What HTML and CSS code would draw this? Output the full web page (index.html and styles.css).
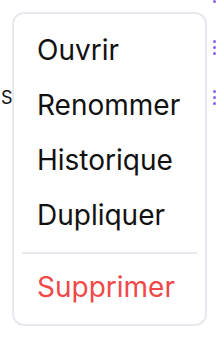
FILE: index.html
```html
<!DOCTYPE html>
<html lang="fr">

<head>
    <meta charset="UTF-8" />
    <meta name="viewport" content="width=device-width, initial-scale=1.0" />
    <title>Menu</title>
    <link rel="stylesheet" href="styles.css">
</head>

<body>

    <div class="page">
        <!-- liste derrière le menu -->
        <div class="list">
            <div class="row first">
                <span class="label"></span>
                <svg class="more" width="3" height="15" viewBox="0 0 3 15"><circle cx="1.5" cy="1.5" r="1.5"/><circle cx="1.5" cy="7.5" r="1.5"/><circle cx="1.5" cy="13.5" r="1.5"/></svg>
            </div>
            <div class="row">
                <span class="label"></span>
                <svg class="more" width="3" height="15" viewBox="0 0 3 15"><circle cx="1.5" cy="1.5" r="1.5"/><circle cx="1.5" cy="7.5" r="1.5"/><circle cx="1.5" cy="13.5" r="1.5"/></svg>
            </div>
            <div class="row">
                <span class="label">Sa</span>
                <svg class="more" width="3" height="15" viewBox="0 0 3 15"><circle cx="1.5" cy="1.5" r="1.5"/><circle cx="1.5" cy="7.5" r="1.5"/><circle cx="1.5" cy="13.5" r="1.5"/></svg>
            </div>
        </div>

        <!-- menu contextuel -->
        <div class="menu">
            <div class="item">Ouvrir</div>
            <div class="item">Renommer</div>
            <div class="item">Historique</div>
            <div class="item">Dupliquer</div>
            <div class="sep"></div>
            <div class="item danger">Supprimer</div>
        </div>
    </div>

</body>

</html>
```

FILE: styles.css
```css
html,
body {
    margin: 0;
    padding: 0;
    background: #fff;
    color: #111;
    font-family: Inter, "Noto Sans", sans-serif;
}

.page {
    position: relative;
    width: 218px;
    height: 338px;
    overflow: hidden;
}

.list {
    margin-top: -32.5px;
}

.row {
    height: 50px;
    display: flex;
    justify-content: space-between;
    align-items: center;
    padding: 0 2.5px 0 1px;
}

.row.first {
    height: 55px;
}

.label {
    font-size: 18px;
}

.more {
    fill: #8b5cf6;
}

/* menu */
.menu {
    position: absolute;
    top: 12px;
    left: 12px;
    width: 195px;
    box-sizing: border-box;
    background: #fff;
    border: 2px solid #e6e9ee;
    border-radius: 12px;
    padding: 9px 8px;
}

.item {
    font-size: 28px;
    line-height: 55px;
    height: 55px;
    padding: 0 15px;
    white-space: nowrap;
}

.danger {
    color: #f04848;
}

.sep {
    height: 2px;
    background: #e6e9ee;
    margin: 8.5px 0 6.5px;
}
```
